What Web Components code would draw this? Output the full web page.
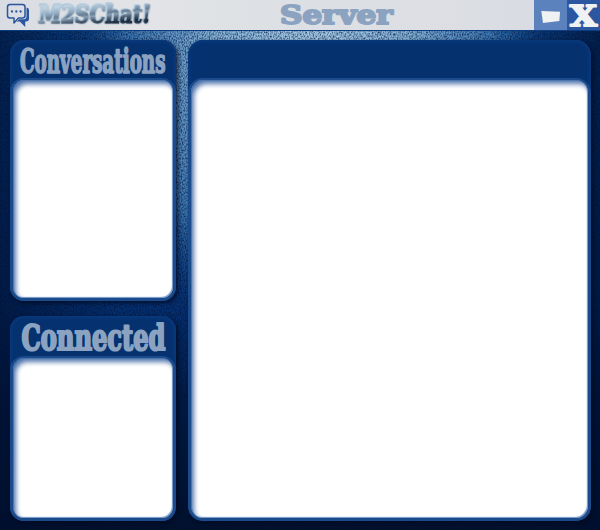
<!DOCTYPE html>
<html lang="en"><head><meta charset="utf-8"><title>M2SChat!</title>
<style>html,body{margin:0;width:600px;height:530px;overflow:hidden;background:#021c44}</style></head>
<body>
<chat-window>
  <title-bar slot="bar"></title-bar>
  <chat-panel slot="side" style="height:261px"><display-text slot="title" text="Conversations" w="170" h="38" x="10" y="33" size="33" len="145.500" sw="1.700"></display-text></chat-panel>
  <chat-panel slot="side" style="height:205px;--head:40px"><display-text slot="title" text="Connected" w="170" h="40" x="11.500" y="34" size="35.500" len="144" sw="2.200"></display-text></chat-panel>
  <chat-panel slot="main" style="height:481px;--r:15px"></chat-panel>
</chat-window>
<script>
const define=(name,html)=>customElements.define(name,class extends HTMLElement{
  connectedCallback(){
    if(this.shadowRoot)return;
    this.attachShadow({mode:'open'}).innerHTML=typeof html==='function'?html(this):html;
  }
});

define('display-text',el=>{
  const a=n=>el.getAttribute(n);
  return `<style>:host{display:block}svg{display:block;overflow:visible}
  text{font-family:"DejaVu Serif Condensed","DejaVu Serif",serif;font-weight:bold;fill:${a('fill')||'#8ba3c1'};stroke:${a('stroke')||a('fill')||'#8ba3c1'};stroke-width:${a('sw')||1.1};stroke-linejoin:round;paint-order:stroke}</style>
  <svg width="${a('w')}" height="${a('h')}" viewBox="0 0 ${a('w')} ${a('h')}"><defs>
  <linearGradient id="metal" gradientUnits="userSpaceOnUse" x1="60" y1="4" x2="62" y2="24"><stop offset="0" stop-color="#bcd0e0"/><stop offset=".3" stop-color="#8fa9c0"/><stop offset=".5" stop-color="#667d94"/><stop offset=".62" stop-color="#8c9fb2"/><stop offset=".8" stop-color="#4b5f74"/><stop offset="1" stop-color="#1d2f42"/></linearGradient>
  <filter id="bevel" x="-10%" y="-20%" width="120%" height="150%">
    <feDropShadow dx="-1.200" dy="-.8" stdDeviation=".6" flood-color="#a3c3da" flood-opacity=".8"/>
    <feDropShadow dx=".8" dy=".6" stdDeviation=".6" flood-color="#8fa4b8" flood-opacity=".6"/></filter></defs>
  <text x="${a('x')}" y="${a('y')}" font-size="${a('size')}" textLength="${a('len')}" lengthAdjust="spacingAndGlyphs" ${a('extra')||''}>${a('text')}</text></svg>`;
});

define('chat-icon',`<style>:host{display:block}svg{display:block}</style>
<svg width="24" height="25" viewBox="0 0 24 25" fill="none">
<path d="M4 1.500h12.500q2.500 0 2.500 2.500v8.500q0 2.500-2.500 2.500h-4L8 20v-5H4q-2.500 0-2.500-2.500V4q0-2.500 2.500-2.500Z" stroke="#2b559c" stroke-width="1.500" stroke-linejoin="round"/>
<path d="M20.500 4.500q2.500.3 2.500 2.700v8.600q0 2.700-3 2.700h-.8v5.500l-5.400-5.500h-3.300l2.700-2.300h4.800q2.500 0 2.500-3Z" fill="#2b559c"/>
<g fill="#2b559c"><circle cx="6" cy="8.500" r="1.150"/><circle cx="10.300" cy="8.500" r="1.150"/><circle cx="14.600" cy="8.500" r="1.150"/></g></svg>`);

define('window-button',`<style>:host{display:block;height:30px;width:var(--w);background:var(--bg)}</style><slot></slot>`);

define('title-bar',`<style>
:host{display:grid;grid-template-columns:6px 24px 1fr 33px 33px;height:30px;box-sizing:border-box;background:linear-gradient(90deg,#d9dce2,#e2e4e7 24%,#dcdfe3 50%,#dddfe3 70%,#d7dae4)}
chat-icon{grid-column:2;margin-top:3px}
.names{display:grid;grid-template-columns:240px 1fr}
svg{display:block}
</style>
<chat-icon></chat-icon>
<div class="names">
<display-text text="M2SChat!" w="130" h="29" x="8" y="22.500" size="24" len="112" sw="1.300" fill="url(#metal)" extra='filter="url(#bevel)" transform="translate(2.500 0) skewX(-6)"'></display-text>
<display-text text="Server" w="140" h="29" x="10" y="23.500" size="26.500" len="112.500" sw="1.900"></display-text>
</div>
<window-button style="--w:33px;--bg:#5c82be"><svg width="33" height="30"><path d="M7.300 11l18.700.8-.6 9.200L9 23Z" fill="#f0f1f3"/></svg></window-button>
<window-button style="--w:33px;--bg:#2b57a0"><display-text text="X" w="33" h="30" x="3" y="26" size="28" len="27" sw="1.800" fill="#f0f1f3"></display-text></window-button>`);

define('chat-panel',`<style>
:host{display:grid;grid-template-rows:var(--head,38px) 1fr;box-sizing:border-box;border-radius:var(--r,14px);background:#05316f;
 box-shadow:inset 0 0 3px 2px #0a397c,2px 2px 4px rgba(0,8,30,.75)}
.head{overflow:hidden}
.body{box-sizing:border-box;border:3px solid #1c4b8c;border-top-width:2px;border-radius:var(--r,14px);background:#fff;
 box-shadow:inset 1px 1px 0 #4c77ae,inset 3px 4px 5px #5276ad,inset -1px -1px 1px #7095c6}
</style><div class="head"><slot name="title"></slot></div><div class="body"></div>`);

define('chat-window',`<style>
:host{display:grid;grid-template-rows:30px 500px;width:600px;height:530px;position:relative;isolation:isolate}
.wall{position:absolute;inset:0;z-index:-1}
.desk{display:grid;grid-template-columns:166px 403px;column-gap:12px;padding:9px 9px 9px 10px;box-sizing:border-box;border-top:1px solid #0c3d80}
.side{display:flex;flex-direction:column;gap:15px}
</style>
<svg class="wall" width="600" height="530"><defs>
<linearGradient id="base" x1="0" y1="0" x2="0" y2="1"><stop offset="0" stop-color="#0b458c"/><stop offset=".35" stop-color="#06387a"/><stop offset=".58" stop-color="#053070"/><stop offset=".75" stop-color="#021c44"/><stop offset="1" stop-color="#01112b"/></linearGradient>
<radialGradient id="glow" gradientUnits="userSpaceOnUse" cx="0" cy="0" r="1" gradientTransform="translate(310 50) scale(250 310)"><stop offset="0" stop-color="#a6cce6"/><stop offset=".4" stop-color="#82b0d6"/><stop offset=".72" stop-color="#4580b8" stop-opacity=".85"/><stop offset="1" stop-color="#083573" stop-opacity="0"/></radialGradient>
<linearGradient id="edge"><stop offset="0" stop-color="#000d2b" stop-opacity=".6"/><stop offset=".2" stop-color="#000d2b" stop-opacity="0"/><stop offset=".85" stop-color="#000d2b" stop-opacity="0"/><stop offset="1" stop-color="#000d2b" stop-opacity=".65"/></linearGradient>
<filter id="grain" x="0" y="0" width="100%" height="100%" color-interpolation-filters="sRGB"><feTurbulence type="fractalNoise" baseFrequency=".75 .5" numOctaves="3" seed="8"/><feColorMatrix type="matrix" values="0 0 0 0 0  0 0 0 0 .07  0 0 0 0 .22  2.200 0 0 0 -.85"/></filter>
</defs><rect width="600" height="530" fill="url(#base)"/><rect width="600" height="530" fill="url(#glow)"/><rect width="600" height="530" fill="url(#edge)"/><rect width="600" height="530" filter="url(#grain)" opacity=".75"/></svg>
<slot name="bar"></slot>
<div class="desk"><div class="side"><slot name="side"></slot></div><div><slot name="main"></slot></div></div>`);
</script>
</body></html>
